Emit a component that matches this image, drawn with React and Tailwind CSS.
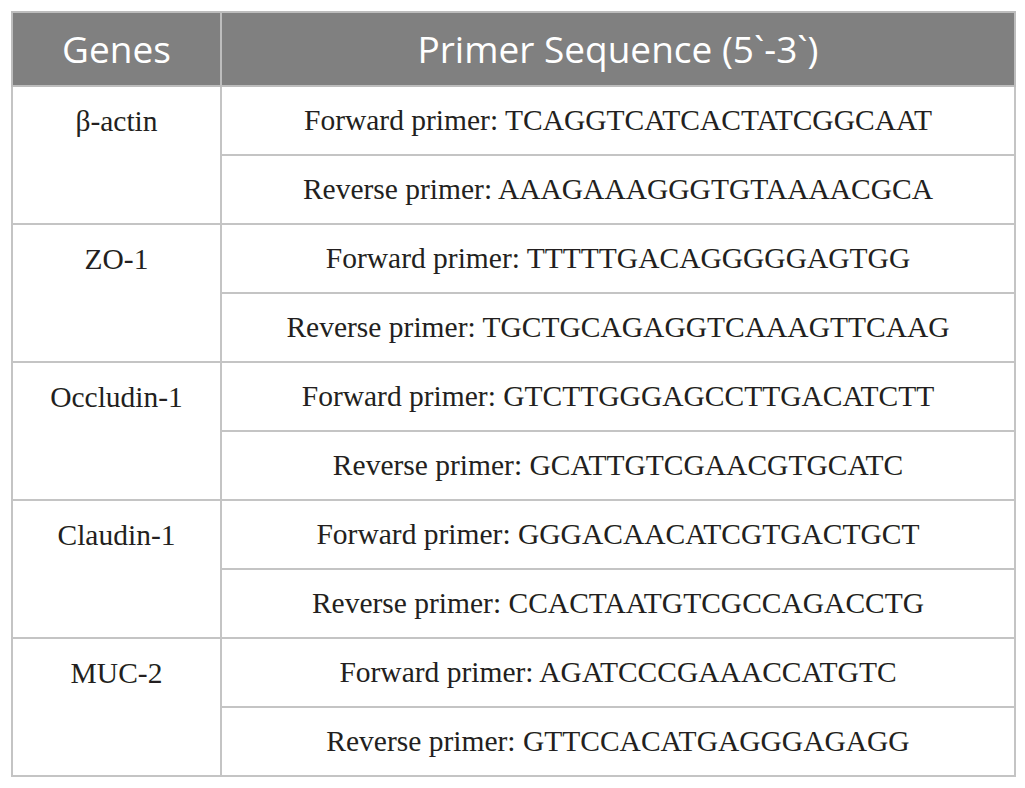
import React from "react";

const rows = [
  ["β-actin", "TCAGGTCATCACTATCGGCAAT", "AAAGAAAGGGTGTAAAACGCA"],
  ["ZO-1", "TTTTTGACAGGGGGAGTGG", "TGCTGCAGAGGTCAAAGTTCAAG"],
  ["Occludin-1", "GTCTTGGGAGCCTTGACATCTT", "GCATTGTCGAACGTGCATC"],
  ["Claudin-1", "GGGACAACATCGTGACTGCT", "CCACTAATGTCGCCAGACCTG"],
  ["MUC-2", "AGATCCCGAAACCATGTC", "GTTCCACATGAGGGAGAGG"],
];

export default function App() {
  return (
    <div className="w-[1025px] h-[788px] bg-white pt-[11px] pl-[11px]">
      <table
        className="border-collapse text-[#231f20]"
        style={{ fontFamily: '"Liberation Serif", serif' }}
      >
        <thead>
          <tr className="h-[74px] bg-[#808080] text-white text-[37px]" style={{ fontFamily: '"Open Sans", sans-serif' }}>
            <th className="w-[209px] border-2 border-[#bdbdbd] font-normal p-0 text-center align-middle">Genes</th>
            <th className="w-[794px] border-2 border-[#bdbdbd] font-normal p-0 text-center align-middle">Primer Sequence (5`-3`)</th>
          </tr>
        </thead>
        <tbody className="text-[29.5px]">
          {rows.map(([g, f, r]) => (
            <React.Fragment key={g}>
              <tr className="h-[69px]">
                <td rowSpan={2} className="border-2 border-[#c4c4c4] p-0 text-center align-top">
                  <div className="h-[69px] flex items-center justify-center">{g}</div>
                </td>
                <td className="border-2 border-[#c4c4c4] p-0 text-center align-middle">Forward primer: {f}</td>
              </tr>
              <tr className="h-[69px]">
                <td className="border-2 border-[#c4c4c4] p-0 text-center align-middle">Reverse primer: {r}</td>
              </tr>
            </React.Fragment>
          ))}
        </tbody>
      </table>
    </div>
  );
}
